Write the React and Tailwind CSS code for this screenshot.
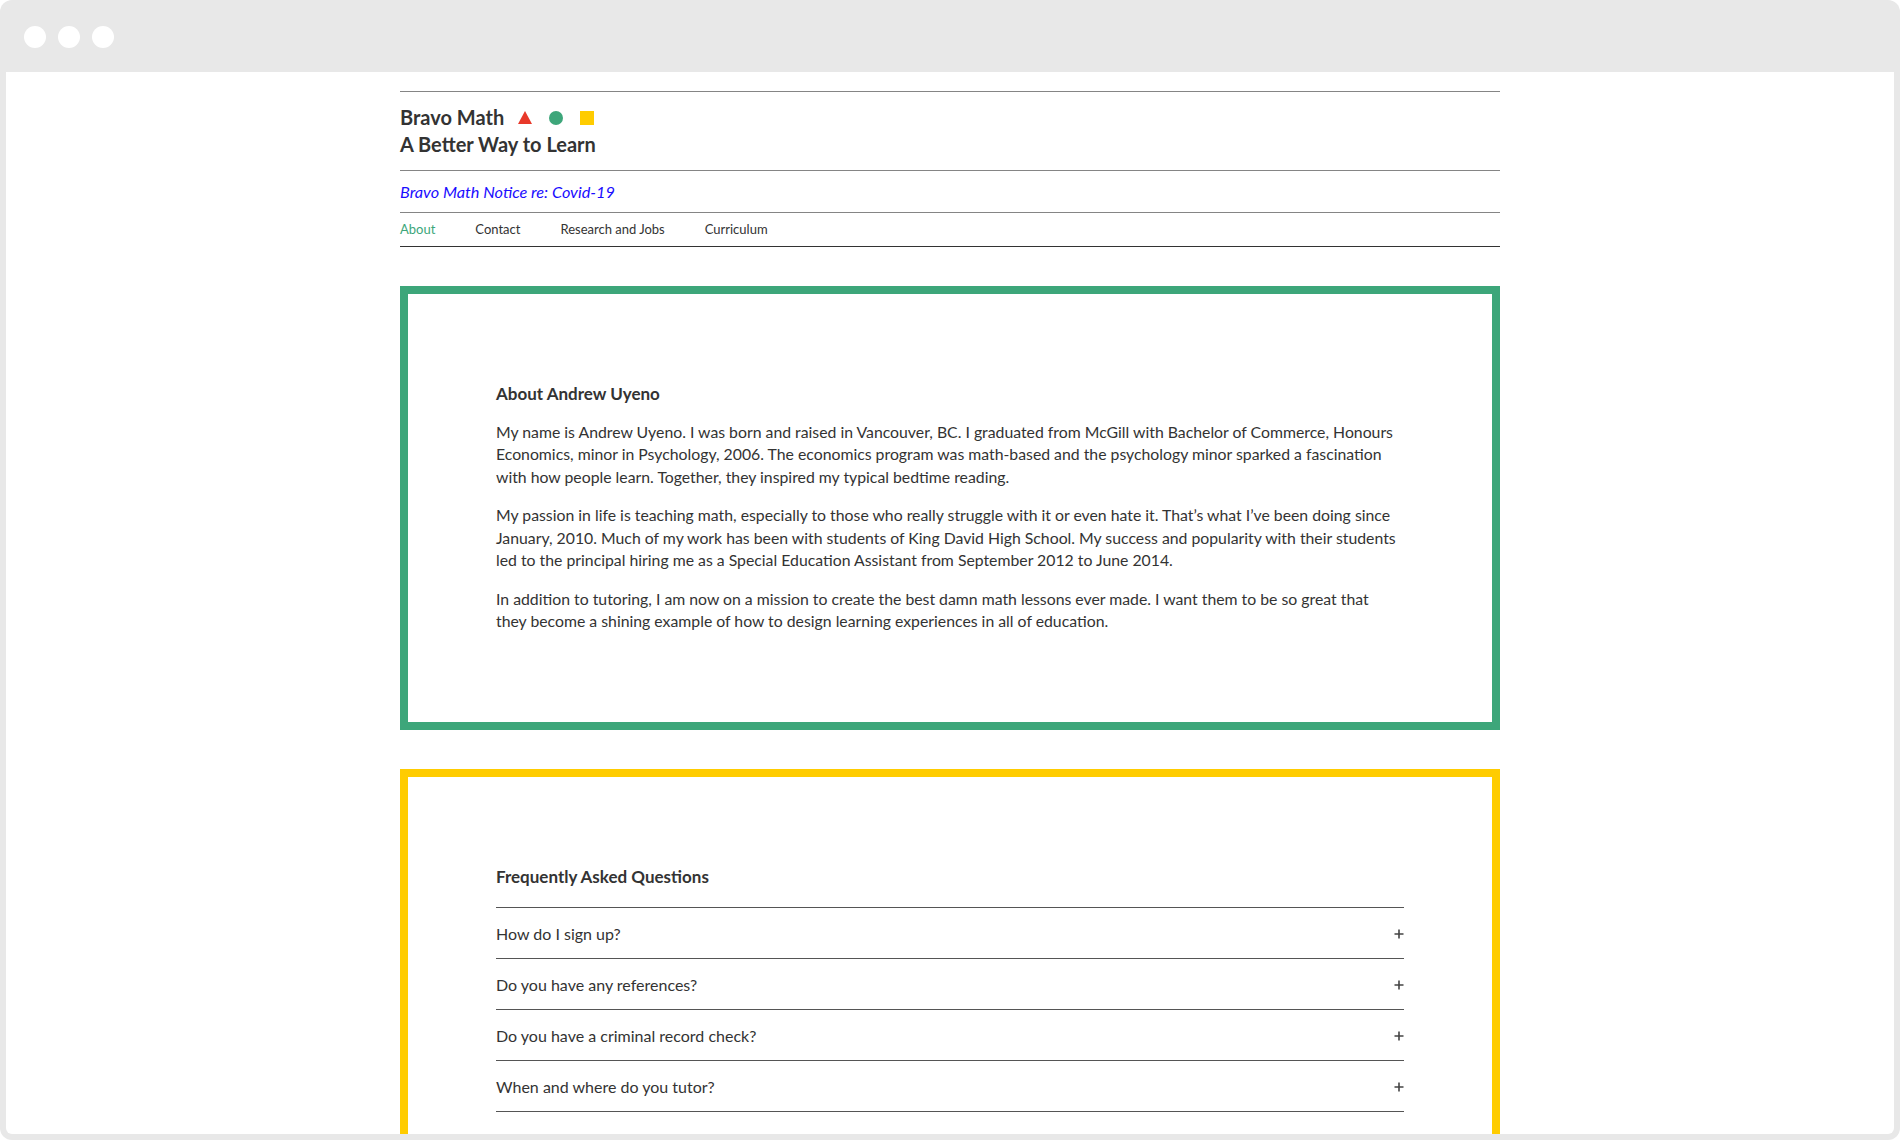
import React from 'react';

const faqs = [
  'How do I sign up?',
  'Do you have any references?',
  'Do you have a criminal record check?',
  'When and where do you tutor?',
];

const Plus = () => (
  <svg width="10" height="10" viewBox="0 0 10 10" className="shrink-0">
    <path d="M5 0.5v9M0.5 5h9" stroke="#444" strokeWidth="1.6" fill="none" />
  </svg>
);

const Shapes = () => (
  <div className="flex items-center gap-[17px] ml-[14px]">
    <svg width="14" height="13" viewBox="0 0 14 13">
      <path d="M7 0L14 13H0Z" fill="#e8392a" />
    </svg>
    <div className="w-[14px] h-[14px] rounded-full bg-[#3da67a]" />
    <div className="w-[14px] h-[14px] bg-[#ffcc00]" />
  </div>
);

export default function App() {
  return (
    <div
      className="w-[1900px] h-[1140px] bg-white overflow-hidden"
      style={{ fontFamily: 'Lato, "Noto Sans", sans-serif' }}
    >
      <div className="h-full rounded-[12px] bg-[#e8e8e8] flex flex-col px-[6px] pb-[6px]">
        {/* window chrome */}
        <div className="h-[72px] shrink-0 flex items-center gap-[12px] pl-[18px] pt-[2px]">
          <div className="w-[22px] h-[22px] rounded-full bg-white" />
          <div className="w-[22px] h-[22px] rounded-full bg-white" />
          <div className="w-[22px] h-[22px] rounded-full bg-white" />
        </div>

        <div className="flex-1 min-h-0 bg-white overflow-hidden rounded-b-[6px]">
          <div className="w-[1100px] mx-auto pt-[19px] text-[#333]">
            {/* header */}
            <header className="border-t border-[#858585]">
              <div className="pt-[12px] pb-[13px] border-b border-[#858585]">
                <div className="flex items-center h-[27px]">
                  <span className="text-[20px] font-bold leading-[27px]">Bravo Math</span>
                  <Shapes />
                </div>
                <div className="text-[20px] font-bold leading-[26px]">A Better Way to Learn</div>
              </div>
              <div className="pt-[9px] pb-[8px] border-b border-[#858585]">
                <a href="#" className="text-[16.3px] italic leading-[24px] text-[#1a0dff]">
                  Bravo Math Notice re: Covid-19
                </a>
              </div>
              <nav className="flex gap-[40px] pt-[6px] pb-[7px] border-b border-[#333] text-[13px] leading-[20px]">
                <a href="#" className="text-[#3da67a]">About</a>
                <a href="#" className="text-[#333]">Contact</a>
                <a href="#" className="text-[#333]">Research and Jobs</a>
                <a href="#" className="text-[#333]">Curriculum</a>
              </nav>
            </header>

            {/* about */}
            <section className="mt-[39px] border-[8px] border-[#3da67a] px-[88px] pt-[89px] pb-[89px] text-[15.8px] leading-[22.5px]">
              <h2 className="font-bold text-[17px] mb-[15px]">About Andrew Uyeno</h2>
              <p className="mb-[16px]">
                My name is Andrew Uyeno. I was born and raised in Vancouver, BC. I graduated from McGill with Bachelor of Commerce, Honours Economics, minor in Psychology, 2006. The economics program was math-based and the psychology minor sparked a fascination with how people learn. Together, they inspired my typical bedtime reading.
              </p>
              <p className="mb-[16px]">
                My passion in life is teaching math, especially to those who really struggle with it or even hate it. That’s what I’ve been doing since January, 2010. Much of my work has been with students of King David High School. My success and popularity with their students led to the principal hiring me as a Special Education Assistant from September 2012 to June 2014.
              </p>
              <p>
                In addition to tutoring, I am now on a mission to create the best damn math lessons ever made. I want them to be so great that
                <br />
                they become a shining example of how to design learning experiences in all of education.
              </p>
            </section>

            {/* faq */}
            <section className="mt-[39px] border-[8px] border-[#ffcc00] px-[88px] pt-[89px] pb-[88px] text-[16px] leading-[22.5px]">
              <h2 className="font-bold text-[17px] mb-[19px]">Frequently Asked Questions</h2>
              <div className="border-t border-[#555]">
                {faqs.map((q) => (
                  <div key={q} className="flex items-center justify-between h-[51px] pt-[2px] border-b border-[#555]">
                    <span>{q}</span>
                    <Plus />
                  </div>
                ))}
              </div>
            </section>
          </div>
        </div>
      </div>
    </div>
  );
}
